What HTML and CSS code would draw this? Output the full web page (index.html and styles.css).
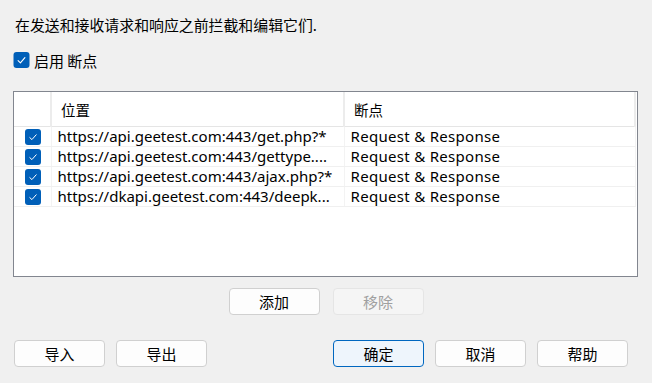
FILE: index.html
```html
<!DOCTYPE html>
<html>
  <head>
    <meta charset="utf-8" />
    <title>断点</title>
    <link rel="stylesheet" href="styles.css">
  </head>

  <body>
    <div class="dialog">
      <p class="intro">在发送和接收请求和响应之前拦截和编辑它们.</p>

      <label class="enable">
        <span class="check big">
          <svg viewBox="0 0 16 16" width="17" height="16"><rect x="0" y="0" width="16" height="16" rx="3" fill="#005fb8"/><path d="M4.6 8.6 L6.9 10.8 L11.4 5.6" fill="none" stroke="#fff" stroke-width="1.1" stroke-linecap="round" stroke-linejoin="round"/></svg>
        </span>
        启用 断点
      </label>

      <!-- breakpoint list -->
      <div class="list">
        <table>
          <colgroup>
            <col class="c-check" />
            <col class="c-url" />
            <col class="c-kind" />
          </colgroup>
          <thead>
            <tr>
              <th></th>
              <th>位置</th>
              <th>断点</th>
            </tr>
          </thead>
          <tbody>
            <tr>
              <td class="box"><span class="check"><svg viewBox="0 0 16 16" width="16" height="16"><rect width="16" height="16" rx="3" fill="#005fb8"/><path d="M4.8 8.6 L6.9 10.6 L11.2 5.8" fill="none" stroke="#fff" stroke-width="1" stroke-linecap="round" stroke-linejoin="round"/></svg></span></td>
              <td>https://api.geetest.com:443/get.php?*</td>
              <td class="kind">Request &amp; Response</td>
            </tr>
            <tr>
              <td class="box"><span class="check"><svg viewBox="0 0 16 16" width="16" height="16"><rect width="16" height="16" rx="3" fill="#005fb8"/><path d="M4.8 8.6 L6.9 10.6 L11.2 5.8" fill="none" stroke="#fff" stroke-width="1" stroke-linecap="round" stroke-linejoin="round"/></svg></span></td>
              <td>https://api.geetest.com:443/gettype....</td>
              <td class="kind">Request &amp; Response</td>
            </tr>
            <tr>
              <td class="box"><span class="check"><svg viewBox="0 0 16 16" width="16" height="16"><rect width="16" height="16" rx="3" fill="#005fb8"/><path d="M4.8 8.6 L6.9 10.6 L11.2 5.8" fill="none" stroke="#fff" stroke-width="1" stroke-linecap="round" stroke-linejoin="round"/></svg></span></td>
              <td>https://api.geetest.com:443/ajax.php?*</td>
              <td class="kind">Request &amp; Response</td>
            </tr>
            <tr>
              <td class="box"><span class="check"><svg viewBox="0 0 16 16" width="16" height="16"><rect width="16" height="16" rx="3" fill="#005fb8"/><path d="M4.8 8.6 L6.9 10.6 L11.2 5.8" fill="none" stroke="#fff" stroke-width="1" stroke-linecap="round" stroke-linejoin="round"/></svg></span></td>
              <td>https://dkapi.geetest.com:443/deepk...</td>
              <td class="kind">Request &amp; Response</td>
            </tr>
          </tbody>
        </table>
      </div>

      <div class="list-actions">
        <button class="btn">添加</button>
        <button class="btn" disabled>移除</button>
      </div>

      <div class="footer">
        <div class="group">
          <button class="btn">导入</button>
          <button class="btn">导出</button>
        </div>
        <div class="group">
          <button class="btn default">确定</button>
          <button class="btn">取消</button>
          <button class="btn">帮助</button>
        </div>
      </div>
    </div>
  </body>
</html>
```

FILE: styles.css
```css
body {
  margin: 0;
  background: #f0f0f0;
  color: #000;
  font-family: "Noto Sans", "Noto Sans CJK SC", sans-serif;
  font-size: 15px;
}

.dialog {
  padding: 0 24px 0 13px;
  height: 383px;
  box-sizing: border-box;
}

.intro {
  margin: 0;
  padding: 15px 0 0 2px;
  font-family: "Noto Sans CJK SC", sans-serif;
  font-size: 14.9px;
  line-height: 20px;
}

.enable {
  display: flex;
  align-items: center;
  gap: 4px;
  margin-top: 16px;
  height: 18px;
  font-family: "Noto Sans CJK SC", sans-serif;
  font-size: 15px;
}

.check {
  display: inline-flex;
}

.list {
  margin-top: 22px;
  width: 625px;
  height: 186px;
  box-sizing: border-box;
  border: 1px solid #82868f;
  background: #fff;
  padding-right: 2px;
}

table {
  width: 622px;
  border-collapse: collapse;
  table-layout: fixed;
}

col.c-check {
  width: 37px;
}

col.c-url {
  width: 293px;
}

th {
  height: 34px;
  padding: 0 0 0 9px;
  text-align: left;
  font-weight: normal;
  font-family: "Noto Sans CJK SC", sans-serif;
  font-size: 14.5px;
  border-bottom: 1px solid #e5e5e5;
  border-right: 2px solid #ececec;
}

th:first-child {
  padding: 0;
}

td {
  height: 19px;
  padding: 0 0 0 6px;
  white-space: nowrap;
  overflow: hidden;
  line-height: 19px;
  border-bottom: 1px solid #f0f0f0;
  border-right: 1px solid #f3f3f3;
}

td.kind {
  padding-left: 6px;
  letter-spacing: 0.3px;
}

td.box {
  padding: 0 0 0 11px;
}

td.box .check {
  vertical-align: middle;
  margin-top: -2px;
}

.list-actions {
  display: flex;
  justify-content: center;
  gap: 13px;
  margin-top: 11px;
  padding-left: 11px;
}

.btn {
  width: 91px;
  height: 27px;
  padding: 0;
  border: 1px solid #d0d0d0;
  border-radius: 4px;
  background: #fdfdfd;
  color: #000;
  font-family: "Noto Sans CJK SC", sans-serif;
  font-size: 15px;
}

.btn:disabled {
  background: #f5f5f5;
  border-color: #e5e5e5;
  color: #a0a0a0;
}

.btn.default {
  background: #eef5fc;
  border-color: #0067c0;
}

.footer {
  display: flex;
  justify-content: space-between;
  margin-top: 25px;
  padding-left: 1px;
}

.group {
  display: flex;
  gap: 11px;
}
```
